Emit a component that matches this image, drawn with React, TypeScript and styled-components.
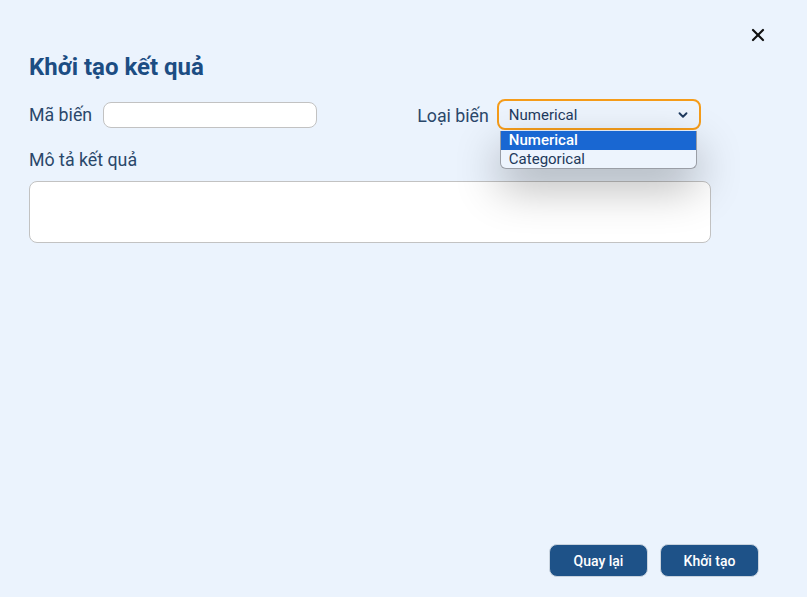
import styled, { createGlobalStyle } from 'styled-components';
import { ChevronDown, X } from 'lucide-react';

const GlobalStyle = createGlobalStyle`
  html, body {
    margin: 0;
    padding: 0;
    background-color: #ebf3fd;
  }
  * {
    box-sizing: border-box;
  }
`;

const options = ['Numerical', 'Categorical'];

const App = () => {
  return (
    <>
      <GlobalStyle />
      <Page>
        <CloseRow>
          <CloseBtn aria-label="close">
            <X size={20} strokeWidth={2.6} />
          </CloseBtn>
        </CloseRow>
        <Title>Khởi tạo kết quả</Title>
        <FieldRow>
          <Label>Mã biến</Label>
          <TextInput />
          <SelectGroup>
            <Label>Loại biến</Label>
            <SelectWrap>
              <SelectBox>
                <SelectText>Numerical</SelectText>
                <ChevronDown size={14} strokeWidth={3.2} color="#1e3a5f" />
              </SelectBox>
              <OptionList>
                {options.map((o, i) => (
                  <OptionItem key={o} $active={i === 0}>
                    {o}
                  </OptionItem>
                ))}
              </OptionList>
            </SelectWrap>
          </SelectGroup>
        </FieldRow>
        <DescLabel>Mô tả kết quả</DescLabel>
        <TextArea />
        <Footer>
          <ActionBtn>Quay lại</ActionBtn>
          <ActionBtn>Khởi tạo</ActionBtn>
        </Footer>
      </Page>
    </>
  );
};

const Page = styled.div`
  display: flex;
  flex-direction: column;
  height: 597px;
  padding: 25px 39px 20px 29px;
  font-family: Roboto, 'Noto Sans', sans-serif;
  background-color: #ebf3fd;
`;

const CloseRow = styled.div`
  display: flex;
  justify-content: flex-end;
`;

const CloseBtn = styled.button`
  display: flex;
  align-items: center;
  justify-content: center;
  width: 20px;
  height: 20px;
  padding: 0;
  border: none;
  background: none;
  color: #111;
  cursor: pointer;
`;

const Title = styled.h1`
  margin: 8px 0 0 0;
  font-size: 24px;
  line-height: 28px;
  font-weight: 700;
  color: #1c4d83;
`;

const FieldRow = styled.div`
  display: flex;
  align-items: center;
  height: 31px;
  margin-top: 18px;
`;

const Label = styled.span`
  font-size: 17.8px;
  line-height: 21px;
  color: #2a476a;
`;

const TextInput = styled.input`
  width: 214px;
  height: 26px;
  margin-left: 11px;
  border: 1px solid #c2c2c2;
  border-radius: 8px;
  background-color: #fff;
  outline: none;
`;

const SelectGroup = styled.div`
  display: flex;
  align-items: center;
  gap: 8px;
  margin-left: 100px;
  margin-top: 2px;
`;

const SelectWrap = styled.div`
  position: relative;
  margin-top: -2px;
`;

const SelectBox = styled.div`
  display: flex;
  align-items: center;
  justify-content: space-between;
  width: 204px;
  height: 31px;
  padding: 0 9px 0 10px;
  border: 2px solid #f59c1a;
  border-radius: 8px;
  background-color: #edf4fd;
`;

const SelectText = styled.span`
  font-size: 15px;
  color: #1e3a5f;
`;

const OptionList = styled.div`
  position: absolute;
  top: 32px;
  left: 3px;
  width: 197px;
  border: 1px solid #9a9ea6;
  border-top: none;
  border-radius: 0 0 6px 6px;
  background-color: #edf4fd;
  overflow: hidden;
  box-shadow: 0 18px 45px rgba(0, 0, 0, 0.3);
  z-index: 2;
`;

const OptionItem = styled.div<{ $active: boolean }>`
  height: 18.5px;
  padding-left: 8px;
  font-size: 15px;
  line-height: 18.5px;
  color: ${p => (p.$active ? '#fff' : '#22395a')};
  font-weight: ${p => (p.$active ? 500 : 400)};
  background-color: ${p => (p.$active ? '#1967d2' : 'transparent')};
`;

const DescLabel = styled(Label)`
  margin-top: 19px;
`;

const TextArea = styled.textarea`
  width: 682px;
  height: 62px;
  margin-top: 11px;
  border: 1px solid #c2c2c2;
  border-radius: 8px;
  background-color: #fff;
  resize: none;
  outline: none;
`;

const Footer = styled.div`
  display: flex;
  justify-content: flex-end;
  gap: 12px;
  margin-top: auto;
  padding-right: 9px;
`;

const ActionBtn = styled.button`
  width: 99px;
  height: 33px;
  border: 1px solid #c9d3de;
  border-radius: 8px;
  background-color: #1e5288;
  color: #fff;
  font-family: Roboto, 'Noto Sans', sans-serif;
  font-size: 14px;
  font-weight: 500;
  cursor: pointer;
`;

export default App;
